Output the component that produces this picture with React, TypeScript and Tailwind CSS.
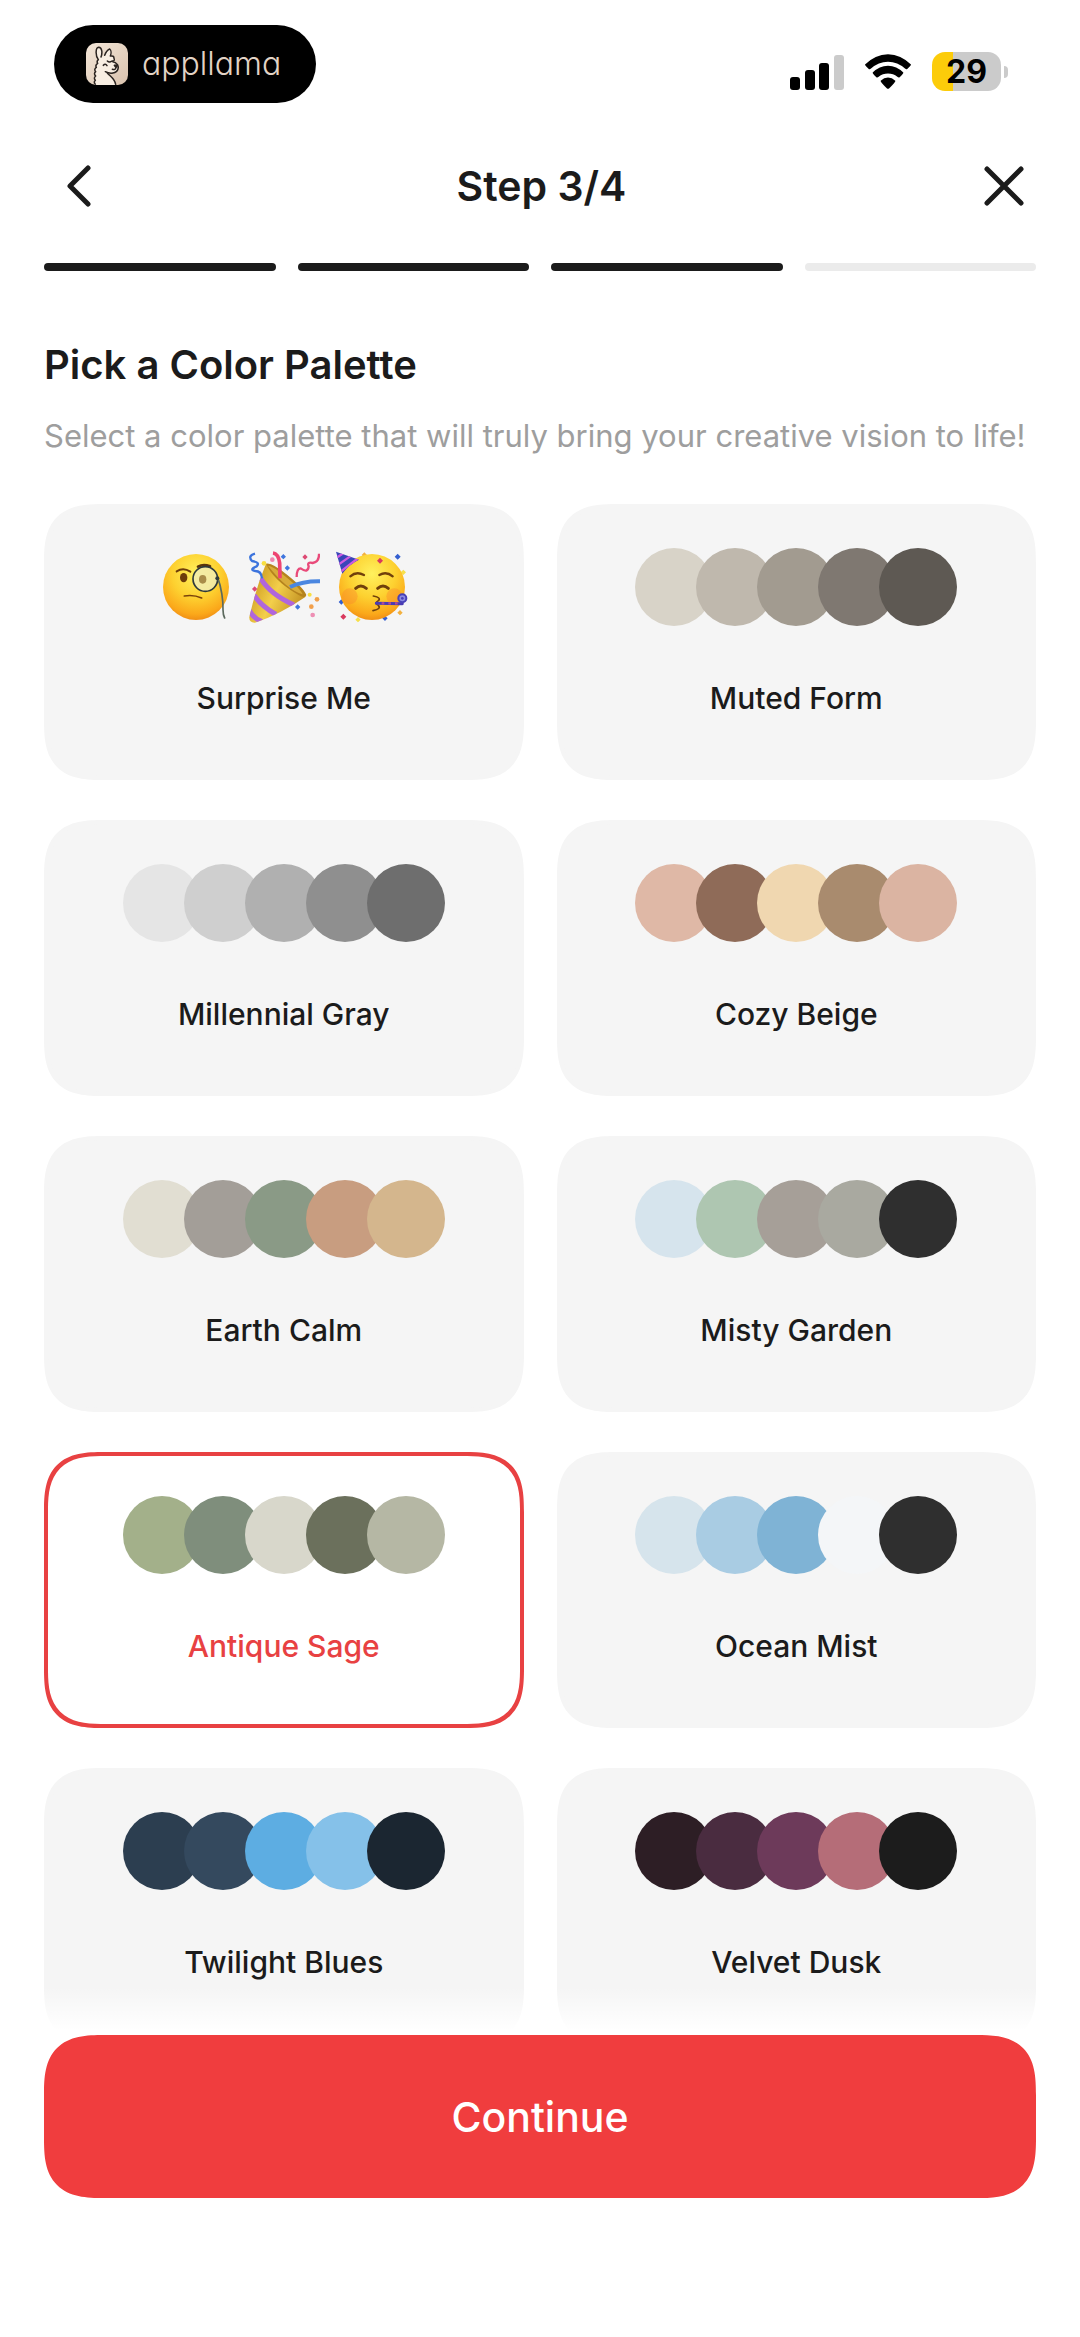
import { useState } from "react";

type Palette = { name: string; colors: string[] };

const palettes: Palette[] = [
  { name: "Surprise Me", colors: [] },
  { name: "Muted Form", colors: ["#d8d3c8", "#bfb8ad", "#a29b90", "#7f7871", "#5e5953"] },
  { name: "Millennial Gray", colors: ["#e5e5e5", "#cfcfcf", "#b0b0b0", "#8f8f8f", "#6e6e6e"] },
  { name: "Cozy Beige", colors: ["#dfb8a6", "#8f6b58", "#f0d7b0", "#a98b6e", "#dbb4a2"] },
  { name: "Earth Calm", colors: ["#e1ded2", "#a39e98", "#8a9a86", "#c89d80", "#d4b68d"] },
  { name: "Misty Garden", colors: ["#d6e4ed", "#aec6b1", "#a69f98", "#a9a9a0", "#2f2f2f"] },
  { name: "Antique Sage", colors: ["#a3b08a", "#7f8e7c", "#d8d7cb", "#6b705c", "#b5b7a4"] },
  { name: "Ocean Mist", colors: ["#d6e4ec", "#a9cce3", "#7fb3d5", "#f4f6f8", "#2f2f2f"] },
  { name: "Twilight Blues", colors: ["#2c3e50", "#34495e", "#5dade2", "#85c1e9", "#1b2631"] },
  { name: "Velvet Dusk", colors: ["#2d1e25", "#4a2c40", "#6d3a5a", "#b56d78", "#1c1c1c"] },
];

function LlamaIcon() {
  return (
    <svg viewBox="0 0 126 126" className="size-[42px] rounded-[10px]" aria-hidden="true">
      <defs>
        <linearGradient id="llamaBg" x1="0" y1="0" x2="1" y2="1">
          <stop offset="0" stopColor="#f3e6d8" />
          <stop offset="1" stopColor="#d9c2ad" />
        </linearGradient>
      </defs>
      <rect width="126" height="126" fill="url(#llamaBg)" />
      <path
        d="M28 126 Q22 118 28 112 Q22 105 29 99 Q22 92 29 86 Q23 79 31 73 Q27 66 35 61 Q31 55 38 50 C28 38 28 14 38 13 C48 14 50 28 47 40 L52 41 C56 30 62 20 70 18 C76 22 75 32 73 39 Q82 36 84 45 Q88 52 80 55 C92 57 100 70 96 80 C92 92 78 92 68 88 C66 100 88 104 90 126 Z"
        fill="#f8eee2"
      />
      <g fill="none" stroke="#2b2420" strokeWidth="4.5" strokeLinecap="round" strokeLinejoin="round">
        <path d="M28 124 Q22 118 28 112 Q22 105 29 99 Q22 92 29 86 Q23 79 31 73 Q27 66 35 61 Q31 55 37 50 C28 38 28 14 38 13 C48 14 50 28 45 42" />
        <path d="M56 37 C60 26 66 20 71 18 C76 22 76 32 73 39 Q84 37 84 46 Q88 54 78 54 Q70 60 64 54" />
        <path d="M80 56 C92 58 99 68 96 78 C92 92 72 94 58 86" />
        <path d="M52 67 Q58 60 63 68" />
        <path d="M85 67 L95 66 L90 74 Z M90 74 Q88 82 79 79" />
        <path d="M64 90 C72 100 86 106 89 124" />
      </g>
    </svg>
  );
}

function SignalIcon() {
  return (
    <svg viewBox="0 0 54 36" className="h-9 w-[54px]" aria-label="Signal">
      <rect x="0" y="23" width="10" height="13" rx="3" />
      <rect x="15" y="16" width="10" height="20" rx="3" />
      <rect x="29" y="9" width="10" height="27" rx="3" />
      <rect x="44" y="1" width="10" height="35" rx="3" fill="#cbcbcb" />
    </svg>
  );
}

function WifiIcon() {
  return (
    <svg viewBox="314 72 138 104" className="h-[35px] w-[46px]" aria-label="Wi-Fi">
      <path d="M314 103 Q344 73 383 72 Q422 73 452 103 Q452 106 440 117 Q437 118 434 115 Q412 96 383 95 Q354 96 332 115 Q329 118 326 117 Q314 106 314 103 Z" />
      <path d="M337 127 Q357 108 383 107 Q409 108 429 127 Q430 130 417 142 Q414 143 411 140 Q399 130 383 130 Q367 130 355 140 Q352 143 349 142 Q336 130 337 127 Z" />
      <path d="M361 152 Q371 142 383 142 Q395 142 405 152 Q406 155 386 175 Q383 177 380 175 Q360 155 361 152 Z" />
    </svg>
  );
}

function Battery() {
  return (
    <div className="flex items-center gap-[3px]">
      <div className="flex h-[39px] w-[69px] items-center justify-center rounded-[13px] bg-linear-to-r from-[#fccc0a] from-[30%] to-[#cbcbcb] to-[30%] text-[32px] leading-none font-bold text-black">
        29
      </div>
      <div className="h-3 w-1 rounded-r-full bg-[#cbcbcb]" />
    </div>
  );
}

function MonocleFace() {
  return (
    <svg viewBox="60 60 216 216" className="size-[72px]" aria-hidden="true">
      <defs>
        <radialGradient id="faceGold" cx="0.5" cy="0.3" r="0.72">
          <stop offset="0" stopColor="#fff15e" />
          <stop offset="0.5" stopColor="#fdd130" />
          <stop offset="0.85" stopColor="#fba81a" />
          <stop offset="1" stopColor="#ee8a14" />
        </radialGradient>
      </defs>
      <circle cx="168" cy="168" r="99" fill="url(#faceGold)" />
      <ellipse cx="131" cy="140" rx="11" ry="14" fill="#6e3d0a" />
      <path d="M110 121 Q130 108 151 122" fill="none" stroke="#6e3d0a" strokeWidth="6" strokeLinecap="round" />
      <path d="M174 107 Q190 98 210 106" fill="none" stroke="#5a340c" strokeWidth="8" strokeLinecap="round" />
      <path d="M133 195 Q160 190 185 201" fill="none" stroke="#7a430b" strokeWidth="5" strokeLinecap="round" />
      <circle cx="196" cy="144" r="37" fill="#f2ecb0" fillOpacity="0.85" stroke="#2f3a3c" strokeWidth="5" />
      <ellipse cx="188" cy="145" rx="11" ry="13" fill="#a98c48" />
      <path d="M233 140 C244 168 250 210 249 236 Q249 252 254 261" fill="none" stroke="#5c6a5e" strokeWidth="5" strokeLinecap="round" />
      <circle cx="232" cy="142" r="6" fill="#2f3a3c" />
    </svg>
  );
}

function PartyPopper() {
  return (
    <svg viewBox="324 60 216 216" className="size-[72px]" aria-hidden="true">
      <defs>
        <linearGradient id="cone" x1="0" y1="0.3" x2="1" y2="0.8">
          <stop offset="0" stopColor="#c9961b" />
          <stop offset="0.45" stopColor="#f3cf4b" />
          <stop offset="1" stopColor="#b9851a" />
        </linearGradient>
        <clipPath id="coneClip">
          <path d="M378 98 L497 197 Q420 250 345 275 Q327 276 328 258 Q348 170 378 98 Z" />
        </clipPath>
      </defs>
      <path d="M378 98 L497 197 Q420 250 345 275 Q327 276 328 258 Q348 170 378 98 Z" fill="url(#cone)" />
      <g clipPath="url(#coneClip)" fill="none" stroke="#b066dd" strokeWidth="15">
        <path d="M362 142 Q390 190 462 222" />
        <path d="M342 192 Q362 224 408 250" />
        <path d="M328 238 Q340 262 366 272" />
      </g>
      <path d="M378 98 Q394 92 442 132 Q492 172 499 192 Q496 206 466 186 Q400 146 378 98 Z" fill="#b5831d" />
      <path d="M384 104 Q398 104 438 138 Q482 174 488 190 Q440 176 384 104 Z" fill="#d8ab39" />
      <path d="M399 66 Q415 68 419 96 L420 142" fill="none" stroke="#ee4472" strokeWidth="11" />
      <path d="M450 168 Q490 150 540 151" fill="none" stroke="#4a86e0" strokeWidth="12" />
      <path d="M345 68 Q322 74 336 90 Q362 94 350 106 Q326 116 346 120 Q364 120 366 142" fill="none" stroke="#3c74dd" strokeWidth="7" />
      <path d="M470 138 Q470 112 482 112 Q504 128 506 106 Q500 92 518 96 Q538 92 537 68" fill="none" stroke="#e94a7a" strokeWidth="7" />
      <g fill="#3f76de">
        <path d="M430 69l8 8-8 8-8-8Z M442 103l8 8-8 8-8-8Z M473 220l8 8-8 8-8-8Z" />
      </g>
      <g fill="#dd4a74">
        <path d="M495 70l8 8-8 8-8-8Z M344 166l8 8-8 8-8-8Z" />
      </g>
      <circle cx="397" cy="86" r="7" fill="#ee86ae" />
      <circle cx="518" cy="252" r="7" fill="#ee8fb4" />
      <circle cx="372" cy="97" r="7" fill="#f8df41" />
      <circle cx="509" cy="191" r="6" fill="#f8df41" />
      <circle cx="531" cy="205" r="7" fill="#f2a04b" />
      <circle cx="514" cy="227" r="7" fill="#f2a04b" />
    </svg>
  );
}

function PartyFace() {
  return (
    <svg viewBox="591 60 216 216" className="size-[72px]" aria-hidden="true">
      <defs>
        <clipPath id="hatClip">
          <path d="M591 62 L660 86 Q630 100 610 128 Z" />
        </clipPath>
      </defs>
      <g fill="#f3b13f">
        <path d="M676 64l8 8-8 8-8-8Z M783 237l8 8-8 8-8-8Z" />
      </g>
      <g fill="#f7e04a">
        <path d="M793 116l8 8-8 8-8-8Z M657 258l8 8-8 8-8-8Z" />
      </g>
      <g fill="#345fd0">
        <path d="M776 68l9 9-9 9-9-9Z M607 205l8 8-8 8-8-8Z M738 254l8 8-8 8-8-8Z" />
      </g>
      <circle cx="699" cy="168" r="99" fill="url(#faceGold)" />
      <circle cx="632" cy="196" r="24" fill="#fb8a2c" fillOpacity="0.4" />
      <circle cx="766" cy="196" r="24" fill="#fb8a2c" fillOpacity="0.4" />
      <path d="M591 62 L660 86 Q630 100 610 128 Z" fill="#3946b8" />
      <g clipPath="url(#hatClip)" fill="none" stroke="#cf5be0" strokeWidth="7">
        <path d="M590 82 L620 62 M594 104 L642 70 M602 124 L662 78" />
      </g>
      <g fill="none" stroke="#70400b" strokeLinecap="round">
        <path d="M634 136 Q652 120 675 132" strokeWidth="7" />
        <path d="M721 132 Q742 120 761 136" strokeWidth="7" />
        <path d="M650 172 Q665 158 682 172" strokeWidth="9" />
        <path d="M716 172 Q732 158 748 172" strokeWidth="9" />
        <path d="M703 195 Q728 200 718 209 Q706 217 718 223 Q728 234 702 239" strokeWidth="5" />
      </g>
      <path d="M712 217 L790 218" stroke="#4a3bb4" strokeWidth="9" strokeLinecap="round" />
      <circle cx="790" cy="202" r="12" fill="#8b8ae0" stroke="#4741b8" strokeWidth="6" />
      <circle cx="790" cy="202" r="4" fill="#4741b8" />
      <path d="M728 217h8 M748 217h8 M768 217h8" stroke="#b94a8e" strokeWidth="7" />
      <g fill="#d93a5e">
        <path d="M723 80l9 9-9 9-9-9Z M613 248l9 9-9 9-9-9Z" />
      </g>
    </svg>
  );
}

function PaletteCard({ palette, selected, onSelect }: { palette: Palette; selected: boolean; onSelect: () => void }) {
  return (
    <label
      className={
        "relative flex cursor-pointer flex-col items-center rounded-[60px] border-4 px-4 pt-10 pb-[58px] [corner-shape:superellipse(1.5)] " +
        (selected ? "border-[#e84142] bg-white text-[#e84142]" : "border-[#f5f5f5] bg-[#f5f5f5] text-[#1b1b1b]")
      }
    >
      <input type="radio" name="palette" value={palette.name} checked={selected} onChange={onSelect} className="sr-only" />
      <span className="flex h-[78px] items-center justify-center">
        {palette.colors.length === 0 ? (
          <span className="flex gap-4">
            <MonocleFace />
            <PartyPopper />
            <PartyFace />
          </span>
        ) : (
          <span className="flex -space-x-[17px]">
            {palette.colors.map((color, i) => (
              <span key={i} className="size-[78px] rounded-full" style={{ backgroundColor: color }} />
            ))}
          </span>
        )}
      </span>
      <span className="mt-[52px] text-[30px] leading-10 font-medium">{palette.name}</span>
    </label>
  );
}

export default function App() {
  const [selected, setSelected] = useState("Antique Sage");

  return (
    <div className="flex h-screen flex-col bg-white font-['Inter',sans-serif] text-[#1b1b1b]">
      <div className="flex items-end justify-between pt-[25px] pr-[72px] pl-[54px]">
        <div className="flex h-[78px] w-[262px] items-center gap-[14px] rounded-full bg-black pl-8">
          <LlamaIcon />
          <span className="text-[32px] leading-10 font-light text-[#e2d3c5] [font-feature-settings:'cv11']">appllama</span>
        </div>
        <div className="flex items-center gap-[21px] pb-3">
          <SignalIcon />
          <WifiIcon />
          <Battery />
        </div>
      </div>

      <header className="mt-6 flex h-[118px] items-center justify-between pr-[43px] pl-[46px]">
        <button type="button" aria-label="Back" className="flex size-[66px] items-center justify-center">
          <svg viewBox="0 0 24 42" className="h-[42px] w-6" fill="none" stroke="currentColor" strokeWidth="5" strokeLinecap="round" strokeLinejoin="round">
            <path d="M21 3 L3 21 L21 39" />
          </svg>
        </button>
        <h1 className="text-[41px] leading-[48px] font-semibold">Step 3/4</h1>
        <button type="button" aria-label="Close" className="flex size-[66px] items-center justify-center">
          <svg viewBox="0 0 40 40" className="size-10" fill="none" stroke="currentColor" strokeWidth="5" strokeLinecap="round">
            <path d="M3 3 L37 37 M37 3 L3 37" />
          </svg>
        </button>
      </header>

      <div className="mt-[18px] grid grid-cols-4 gap-[22px] px-11" role="progressbar" aria-label="Progress" aria-valuemin={0} aria-valuemax={4} aria-valuenow={3}>
        <div className="h-2 rounded-full bg-[#1b1b1b]" />
        <div className="h-2 rounded-full bg-[#1b1b1b]" />
        <div className="h-2 rounded-full bg-[#1b1b1b]" />
        <div className="h-2 rounded-full bg-[#ebebeb]" />
      </div>

      <div className="mt-[70px] px-11">
        <h2 className="text-[40px] leading-[48px] font-semibold">Pick a Color Palette</h2>
        <p className="mt-[27px] text-[31px] leading-10 whitespace-nowrap text-[#9e9e9e]">
          Select a color palette that will truly bring your creative vision to life!
        </p>
      </div>

      <main className="relative mt-12 flex min-h-0 flex-1 flex-col">
        <div className="grid min-h-0 flex-1 grid-cols-2 content-start gap-x-[33px] gap-y-10 overflow-y-auto px-11 [scrollbar-width:none]">
          {palettes.map((palette) => (
            <PaletteCard
              key={palette.name}
              palette={palette}
              selected={selected === palette.name}
              onSelect={() => setSelected(palette.name)}
            />
          ))}
        </div>
        <div className="pointer-events-none absolute inset-x-0 bottom-0 h-12 bg-linear-to-b from-transparent to-white to-90%" />
      </main>

      <footer className="px-11 pb-[139px]">
        <button
          type="button"
          className="h-[163px] w-full rounded-[60px] bg-[#f03d3e] text-[41px] leading-[48px] font-medium text-white [corner-shape:superellipse(1.5)]"
        >
          Continue
        </button>
      </footer>
    </div>
  );
}
